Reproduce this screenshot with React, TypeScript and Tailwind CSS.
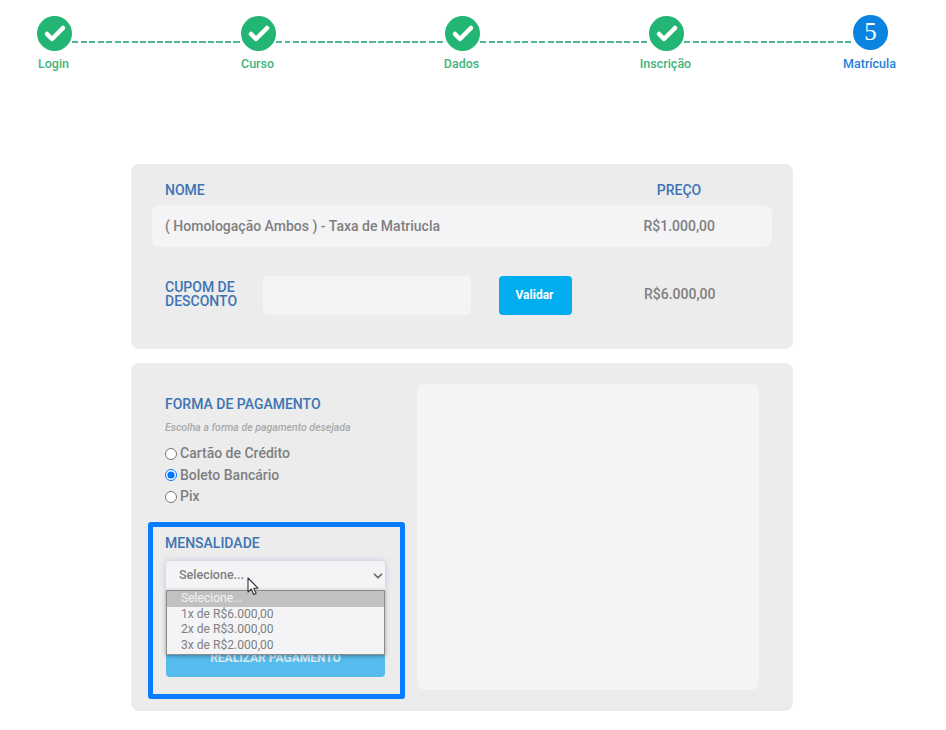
import React from 'react'
import { Check, ChevronDown } from 'lucide-react'

const steps = [
  { label: 'Login', done: true },
  { label: 'Curso', done: true },
  { label: 'Dados', done: true },
  { label: 'Inscrição', done: true },
  { label: 'Matrícula', done: false },
]

const options = ['1x de R$6.000,00', '2x de R$3.000,00', '3x de R$2.000,00']

const Stepper: React.FC = () => (
  <div className="flex items-start pl-[37px] pr-[58px] pt-[15px] h-[164px]">
    {steps.map((step, i) => (
      <React.Fragment key={step.label}>
        <div className="flex flex-col items-center w-[35px] shrink-0">
          {step.done ? (
            <div className="w-[35px] h-[35px] mt-px rounded-full bg-[#22b573] flex items-center justify-center">
              <Check className="w-[24px] h-[24px] text-white" strokeWidth={4.5} />
            </div>
          ) : (
            <div className="w-[35px] h-[35px] rounded-full bg-[#0a84e0] flex items-center justify-center text-white text-[25px] leading-[32px] pb-[2px] font-['Liberation_Serif',serif]">
              5
            </div>
          )}
          <span
            className={`whitespace-nowrap text-[12.5px] font-medium leading-[14px] mr-[2px] ${
              step.done ? 'text-[#3fb47c] mt-[6px]' : 'text-[#1f80d6] mt-[7px]'
            }`}
          >
            {step.label}
          </span>
        </div>
        {i < steps.length - 1 && (
          <div className="flex-1 h-[2px] mt-[26px] bg-[repeating-linear-gradient(90deg,#4fb893_0_6px,transparent_6px_8.5px)]" />
        )}
      </React.Fragment>
    ))}
  </div>
)

const Radio: React.FC<{ label: string; checked?: boolean }> = ({ label, checked }) => (
  <label className="flex items-center h-[21.5px] text-[14px] font-medium text-[#7f7f7f]">
    <input
      type="radio"
      name="pagamento"
      defaultChecked={checked}
      className="w-[12px] h-[12px] m-0 mr-[3px] accent-[#0075ff]"
    />
    {label}
  </label>
)

const App: React.FC = () => {
  return (
    <div className="w-[946px] h-[730px] overflow-hidden bg-white font-['Roboto',sans-serif]">
      <Stepper />

      <div className="mx-[131px] w-[662px] flex flex-col gap-[14px]">
        {/* PRODUTO */}
        <div className="bg-[#ececed] rounded-lg h-[185px] px-[21px] pt-[15px]">
          <div className="flex h-[26px] pb-[3px] items-center text-[14px] font-medium text-[#3d74b3]">
            <span className="pl-[13px]">NOME</span>
            <span className="ml-auto w-[70px] mr-[58px] text-center">PREÇO</span>
          </div>
          <div className="flex items-center h-[42px] bg-[#f4f4f6] rounded-lg text-[14px] font-medium text-[#808080]">
            <span className="pl-[13px]">( Homologação Ambos ) - Taxa de Matriucla</span>
            <span className="ml-auto mr-[57px]">R$1.000,00</span>
          </div>
          <div className="flex items-center mt-[29px] h-[39px]">
            <div className="w-[111px] pl-[13px] pb-[4px] text-[14px] font-medium leading-[14px] text-[#3d74b3]">
              CUPOM DE
              <br />
              DESCONTO
            </div>
            <input className="w-[208px] h-[39px] bg-[#f4f4f6] rounded-sm outline-none" />
            <button className="ml-[28px] w-[73px] h-[39px] rounded bg-[#00aeef] text-white text-[12px] font-bold pb-[2px] pr-[2px]">
              Validar
            </button>
            <span className="ml-[72px] pb-[2px] text-[14px] font-medium text-[#808080]">R$6.000,00</span>
          </div>
        </div>

        {/* PAGAMENTO */}
        <div className="bg-[#ececed] rounded-lg h-[348px] pl-[17px] pt-[21px] flex">
          <div className="w-[257px] shrink-0">
            <div className="pl-[17px] h-[128px]">
              <h2 className="text-[14px] font-medium leading-[20px] text-[#3d74b3] mt-[10px]">
                FORMA DE PAGAMENTO
              </h2>
              <p className="text-[10.5px] italic font-medium leading-[14px] text-[#a9a9a9] mt-[7px] mb-[8px]">
                Escolha a forma de pagamento desejada
              </p>
              <Radio label="Cartão de Crédito" />
              <Radio label="Boleto Bancário" checked />
              <Radio label="Pix" />
            </div>

            <div className="relative w-[257px] h-[177px] border-[5px] border-[#0a7cff] rounded-[3px] pl-[13px] pr-[15px] pt-[7px]">
              <h2 className="-ml-px text-[14px] font-medium leading-[18px] text-[#3d74b3]">MENSALIDADE</h2>
              <div className="mt-[9px] h-[29px] w-[219px] bg-[#f4f4f6] rounded-t shadow-[0_0_6px_rgba(90,130,190,0.35)] flex items-center pl-[13px] text-[12.5px] font-medium text-[#7f7f7f]">
                Selecione...
                <ChevronDown className="ml-auto w-[14px] h-[14px] text-[#666666]" strokeWidth={3} />
              </div>
              <button className="mt-[48px] w-[219px] h-[39px] rounded bg-[#55bcee] text-[#d9eaf3] text-[12px] font-bold">
                REALIZAR PAGAMENTO
              </button>

              {/* lista aberta do select */}
              <div className="absolute left-[13px] top-[63px] w-[219px] h-[65px] bg-[#f4f4f6] border border-[#8c8c8c] shadow-[0_1px_4px_rgba(0,0,0,0.35)] text-[12.1px] leading-[15.7px] text-[#808080]">
                <div className="bg-[#c1c1c1] text-[#f4f4f4] pl-[14px]">Selecione...</div>
                {options.map((o) => (
                  <div key={o} className="pl-[14px]">
                    {o}
                  </div>
                ))}
              </div>

              {/* cursor */}
              <svg
                className="absolute left-[94px] top-[50px] w-[14px] h-[20px]"
                viewBox="0 0 14 20"
              >
                <path
                  d="M1 1v14l3.4-3 2.3 5.5 2.4-1-2.3-5.3H11z"
                  fill="#ffffff"
                  stroke="#333333"
                  strokeWidth="1.1"
                  strokeLinejoin="round"
                />
              </svg>
            </div>
          </div>

          <div className="ml-[12px] w-[342px] h-[306px] bg-[#f4f4f6] rounded-lg" />
        </div>
      </div>
    </div>
  )
}

export default App
